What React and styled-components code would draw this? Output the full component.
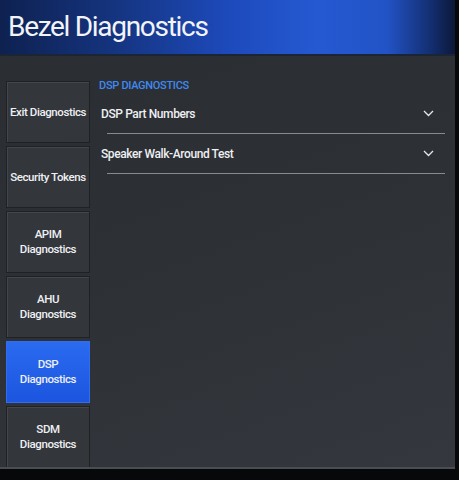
import React from "react"
import styled, { createGlobalStyle } from "styled-components"

const GlobalStyle = createGlobalStyle`
  body {
    margin: 0;
    background: #070809;
    font-family: Roboto, "Liberation Sans", sans-serif;
  }
`
const Screen = styled.div`
  width: 455px;
  height: 467px;
  display: flex;
  flex-direction: column;
  background: linear-gradient(160deg, #2a2d32 0%, #2d3035 50%, #34383e 100%);
  overflow: hidden;
  border-bottom: 2px solid #4a4d52;
`
const TitleBar = styled.div`
  height: 56px;
  flex-shrink: 0;
  display: flex;
  align-items: center;
  padding: 0 0 2px 8px;
  box-sizing: border-box;
  background: linear-gradient(90deg, #0e2150 0%, #15347f 25%, #1d4abb 50%, #2559d2 70%, #2253c6 85%, #132d6e 95%, #0c1838 100%);
  border-bottom: 2px solid #1c2533;
`
const Title = styled.h1`
  margin: 0;
  color: #f2f4f8;
  font-size: 28px;
  font-weight: 400;
  letter-spacing: -1.3px;
`
const Body = styled.div`
  flex: 1;
  display: flex;
  gap: 9px;
  padding: 25px 10px 0 6px;
`
const Sidebar = styled.div`
  width: 84px;
  display: flex;
  flex-direction: column;
  gap: 3px;
`
const NavButton = styled.div`
  height: 62px;
  flex-shrink: 0;
  display: flex;
  align-items: center;
  justify-content: center;
  text-align: center;
  box-sizing: border-box;
  padding: 0 2px;
  color: #eef0f3;
  font-size: 11.5px;
  font-weight: 500;
  letter-spacing: -0.4px;
  line-height: 15px;
  background: ${(p) => (p.$active ? "linear-gradient(180deg, #2a6bf0, #1c55df)" : "#33363b")};
  border: 1px solid ${(p) => (p.$active ? "#2f6df2" : "#1f2125")};
  box-shadow: ${(p) => (p.$active ? "none" : "inset 1px 1px 0 #43464b")};
`
const Content = styled.div`
  flex: 1;
  display: flex;
  flex-direction: column;
`
const SectionLabel = styled.div`
  color: #3f8af2;
  font-size: 11px;
  font-weight: 500;
  letter-spacing: -0.3px;
  margin-top: -2px;
  margin-bottom: 2px;
`
const Row = styled.div`
  height: 39px;
  margin-left: 8px;
  display: flex;
  align-items: center;
  justify-content: space-between;
  border-bottom: 1px solid #878a8f;
  color: #eef0f3;
  font-size: 12px;
  font-weight: 500;
  letter-spacing: -0.4px;
`
const RowText = styled.span`
  margin-left: -6px;
`
const Chevron = styled.svg`
  width: 11px;
  height: 7px;
  margin-right: 11px;
`

const items = [
  { label: "Exit Diagnostics" },
  { label: "Security Tokens" },
  { label: "APIM\nDiagnostics" },
  { label: "AHU\nDiagnostics" },
  { label: "DSP\nDiagnostics", active: true },
  { label: "SDM\nDiagnostics" },
]

const rows = ["DSP Part Numbers", "Speaker Walk-Around Test"]

const App = () => (
  <>
    <GlobalStyle />
    <Screen>
      <TitleBar>
        <Title>Bezel Diagnostics</Title>
      </TitleBar>
      <Body>
        <Sidebar>
          {items.map((item, index) => (
            <NavButton key={index} $active={item.active}>
              <span>
                {item.label.split("\n").map((line, i) => (
                  <div key={i}>{line}</div>
                ))}
              </span>
            </NavButton>
          ))}
        </Sidebar>
        <Content>
          <SectionLabel>DSP DIAGNOSTICS</SectionLabel>
          {rows.map((row) => (
            <Row key={row}>
              <RowText>{row}</RowText>
              <Chevron viewBox="0 0 11 7">
                <path d="M1 1l4.5 4.5L10 1" fill="none" stroke="#e6e8ec" strokeWidth="1.3" />
              </Chevron>
            </Row>
          ))}
        </Content>
      </Body>
    </Screen>
  </>
)

export default App
